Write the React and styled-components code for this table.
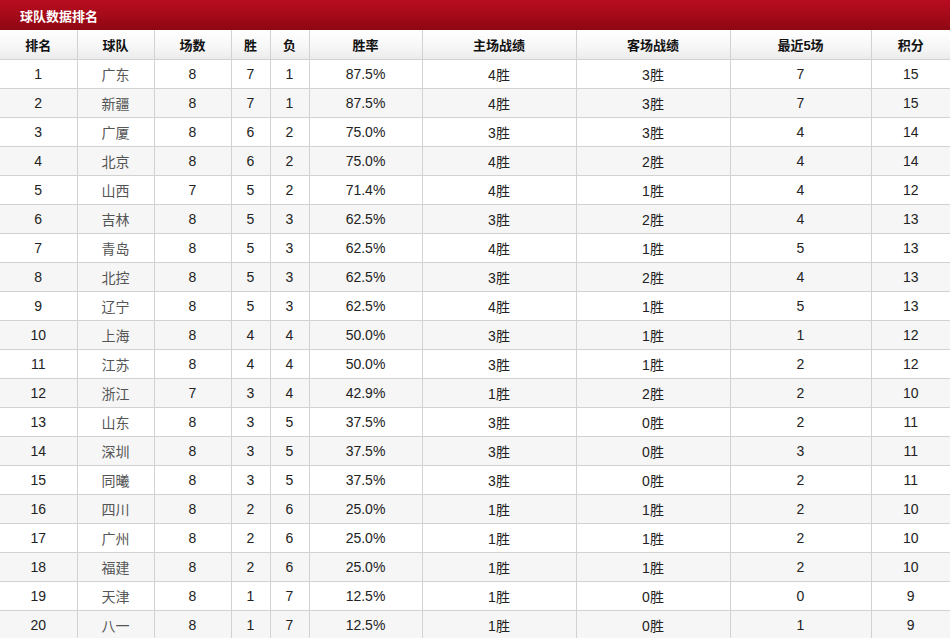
import React from 'react';
import styled, { createGlobalStyle } from 'styled-components';

const GlobalStyle = createGlobalStyle`
  body {
    margin: 0;
    background: #ffffff;
    font-family: "Liberation Sans", "Noto Sans CJK SC", sans-serif;
  }
`;

const Panel = styled.section`
  width: 950px;
  overflow: hidden;
`;

const TitleBar = styled.div`
  height: 30px;
  display: flex;
  align-items: center;
  padding-left: 20px;
  background: linear-gradient(to bottom, #b80d20 0%, #a50a19 50%, #8d0812 100%);
  color: #ffffff;
  font-size: 13px;
  font-weight: bold;
`;

const Table = styled.table`
  width: 950px;
  border-collapse: collapse;
  table-layout: fixed;
`;

const HeadCell = styled.th`
  height: 29px;
  padding: 0;
  box-sizing: border-box;
  border-right: 1px solid #d2d2d2;
  border-bottom: 1px solid #d2d2d2;
  background: linear-gradient(to bottom, #ffffff 0%, #f6f6f6 60%, #ebebeb 100%);
  color: #111;
  font-size: 13px;
  font-weight: bold;
  text-align: center;
  &:last-child { border-right: none; }
`;

const Row = styled.tr`
  background: ${(p) => (p.$alt ? '#f6f6f6' : '#ffffff')};
`;

const Cell = styled.td`
  height: 29px;
  padding: 0;
  box-sizing: border-box;
  border-right: 1px solid #d2d2d2;
  border-bottom: 1px solid #d2d2d2;
  color: ${(p) => (p.$muted ? '#555' : '#222')};
  font-size: 14px;
  text-align: center;
  &:last-child { border-right: none; }
`;

const widths = [77, 77, 77, 39, 39, 113, 154, 154, 141, 79];
const heads = ['排名', '球队', '场数', '胜', '负', '胜率', '主场战绩', '客场战绩', '最近5场', '积分'];

const rows = [
  ['广东', 8, 7, 1, '87.5%', 4, 3, 7, 15],
  ['新疆', 8, 7, 1, '87.5%', 4, 3, 7, 15],
  ['广厦', 8, 6, 2, '75.0%', 3, 3, 4, 14],
  ['北京', 8, 6, 2, '75.0%', 4, 2, 4, 14],
  ['山西', 7, 5, 2, '71.4%', 4, 1, 4, 12],
  ['吉林', 8, 5, 3, '62.5%', 3, 2, 4, 13],
  ['青岛', 8, 5, 3, '62.5%', 4, 1, 5, 13],
  ['北控', 8, 5, 3, '62.5%', 3, 2, 4, 13],
  ['辽宁', 8, 5, 3, '62.5%', 4, 1, 5, 13],
  ['上海', 8, 4, 4, '50.0%', 3, 1, 1, 12],
  ['江苏', 8, 4, 4, '50.0%', 3, 1, 2, 12],
  ['浙江', 7, 3, 4, '42.9%', 1, 2, 2, 10],
  ['山东', 8, 3, 5, '37.5%', 3, 0, 2, 11],
  ['深圳', 8, 3, 5, '37.5%', 3, 0, 3, 11],
  ['同曦', 8, 3, 5, '37.5%', 3, 0, 2, 11],
  ['四川', 8, 2, 6, '25.0%', 1, 1, 2, 10],
  ['广州', 8, 2, 6, '25.0%', 1, 1, 2, 10],
  ['福建', 8, 2, 6, '25.0%', 1, 1, 2, 10],
  ['天津', 8, 1, 7, '12.5%', 1, 0, 0, 9],
  ['八一', 8, 1, 7, '12.5%', 1, 0, 1, 9],
];

const App = () => {
  return (
    <Panel>
      <GlobalStyle />
      <TitleBar>球队数据排名</TitleBar>
      <Table>
        <colgroup>
          {widths.map((w, i) => <col key={i} style={{ width: w }} />)}
        </colgroup>
        <thead>
          <tr>
            {heads.map((h) => <HeadCell key={h}>{h}</HeadCell>)}
          </tr>
        </thead>
        <tbody>
          {rows.map((r, i) => (
            <Row key={r[0]} $alt={i % 2 === 1}>
              <Cell>{i + 1}</Cell>
              <Cell $muted>{r[0]}</Cell>
              <Cell>{r[1]}</Cell>
              <Cell>{r[2]}</Cell>
              <Cell>{r[3]}</Cell>
              <Cell>{r[4]}</Cell>
              <Cell>{r[5]}胜</Cell>
              <Cell>{r[6]}胜</Cell>
              <Cell>{r[7]}</Cell>
              <Cell>{r[8]}</Cell>
            </Row>
          ))}
        </tbody>
      </Table>
    </Panel>
  );
};

export default App;
